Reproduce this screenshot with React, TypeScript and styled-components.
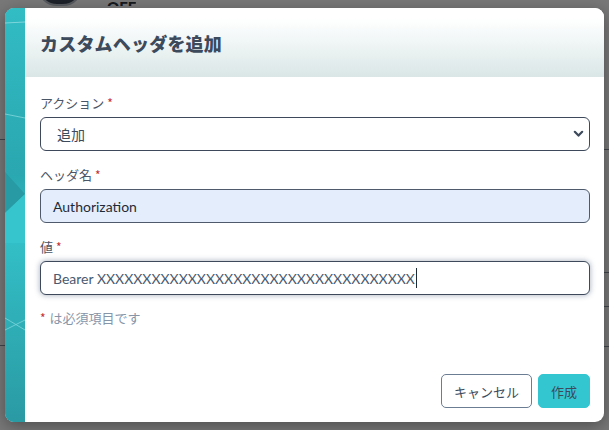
import React from "react";
import styled, { createGlobalStyle } from "styled-components";

const GlobalStyle = createGlobalStyle`
  html, body { margin: 0; padding: 0; }
  body { font-family: Lato, "Noto Sans CJK JP", sans-serif; background: #fff; }
  * { box-sizing: border-box; }
`;

const Page = styled.div`
  position: relative;
  width: 609px;
  height: 430px;
  overflow: hidden;
  background: #ffffff;
`;

const BgTop = styled.div`
  display: flex;
  align-items: flex-end;
  gap: 24px;
  height: 6px;
  padding-left: 37px;
`;

const BgToggle = styled.div`
  width: 46px;
  height: 40px;
  margin-top: -34px;
  border-radius: 23px;
  border: 2px solid #b8c0ca;
  background: linear-gradient(to right, #fff 12%, #3f4a59 12%);
`;

const BgOff = styled.div`
  font-family: Lato, sans-serif;
  font-weight: 900;
  font-size: 15px;
  line-height: 14px;
  color: #2c3644;
  margin-top: -8px;
  height: 6px;
  overflow: hidden;
`;

const BgSides = styled.div`
  display: flex;
  justify-content: space-between;
`;

const BgSide = styled.div<{ $w: number }>`
  width: ${(p) => p.$w}px;
  display: flex;
  flex-direction: column;
`;

const BgRow = styled.div<{ $h: number }>`
  height: ${(p) => p.$h}px;
  border-bottom: 1px solid #8a93a0;
`;

const Overlay = styled.div`
  position: absolute;
  inset: 0;
  background: rgba(0, 0, 0, 0.53);
  padding: 8px 0 0 5px;
`;

const Modal = styled.div`
  width: 599px;
  height: 414px;
  display: grid;
  grid-template-columns: 20px 1fr;
  border-radius: 9px;
  overflow: hidden;
  background: #fff;
  box-shadow: 0 4px 16px rgba(0, 0, 0, 0.35);
`;

const Strip = styled.div`
  height: 100%;
  background: #2eb0b9;
`;

const Main = styled.div`
  display: flex;
  flex-direction: column;
  min-width: 0;
`;

const Header = styled.div`
  height: 69px;
  display: flex;
  align-items: center;
  padding-left: 15px;
  background: linear-gradient(to bottom, #ffffff 15%, #eef4f4 55%, #dae6e6 100%);
`;

const Title = styled.h2`
  margin: 0;
  font-family: "Noto Sans CJK JP", sans-serif;
  font-weight: 900;
  font-size: 18px;
  color: #3c4a5c;
  letter-spacing: 0.2px;
`;

const Body = styled.div`
  flex: 1;
  display: flex;
  flex-direction: column;
  padding: 17px 14px 14px 15px;
`;

const Field = styled.div`
  display: flex;
  flex-direction: column;
  gap: 5px;
  margin-bottom: 15px;
`;

const Label = styled.div`
  font-family: "Noto Sans CJK JP", sans-serif;
  font-size: 13px;
  line-height: 18px;
  color: #4a5566;
`;

const Req = styled.span`
  color: #c53030;
  margin-left: 3px;
  font-size: 12px;
`;

const Box = styled.div<{ $variant?: "select" | "autofill" | "focus" }>`
  height: 34px;
  display: flex;
  align-items: center;
  border-radius: 6px;
  border: 1px solid #4a5568;
  padding: 0 ${(p) => (p.$variant === "select" ? "5px" : "12px")} 0 12px;
  font-family: Lato, "Noto Sans CJK JP", sans-serif;
  font-size: 14px;
  color: ${(p) => (p.$variant === "focus" ? "#4a5a70" : "#1f2a37")};
  background: ${(p) => (p.$variant === "autofill" ? "#e3edfb" : "#fff")};
  border-color: ${(p) => (p.$variant === "autofill" ? "#4f5b6c" : "#3e4a5b")};
  box-shadow: ${(p) =>
    p.$variant === "focus" ? "0 0 5px 1px rgba(60, 80, 110, 0.35)" : "none"};
  white-space: nowrap;
  overflow: hidden;
`;

const SelectText = styled.span`
  flex: 1;
  padding-left: 4px;
  font-family: "Noto Sans CJK JP", sans-serif;
  font-size: 14px;
  color: #3c4a5c;
`;

const Caret = styled.span`
  display: inline-block;
  width: 1px;
  height: 20px;
  background: #1f2a37;
  margin-left: 1px;
`;

const Note = styled.div`
  margin-top: -1px;
  font-family: "Noto Sans CJK JP", sans-serif;
  font-size: 13px;
  line-height: 18px;
  color: #8795a8;
`;

const NoteStar = styled.span`
  color: #c53030;
  margin-right: 4px;
  font-size: 12px;
`;

const Footer = styled.div`
  margin-top: auto;
  display: flex;
  justify-content: flex-end;
  gap: 6px;
`;

const Button = styled.button<{ $primary?: boolean }>`
  height: 34px;
  padding: 0 12px;
  border-radius: 5px;
  font-family: "Noto Sans CJK JP", sans-serif;
  font-size: 13px;
  color: #3c4a5c;
  cursor: pointer;
  border: 1px solid ${(p) => (p.$primary ? "#33c6d1" : "#6a7d93")};
  background: ${(p) => (p.$primary ? "#33c6d1" : "#fff")};
  min-width: ${(p) => (p.$primary ? "52px" : "90px")};
`;

const StripArt = () => (
  <svg width="20" height="414" viewBox="0 0 20 414" style={{ display: "block" }}>
    <defs>
      <linearGradient id="sg" x1="0" y1="0" x2="0" y2="1">
        <stop offset="0" stopColor="#32bcc4" />
        <stop offset="0.4" stopColor="#2aa7b0" />
        <stop offset="0.55" stopColor="#33c0c8" />
        <stop offset="1" stopColor="#2a9aa3" />
      </linearGradient>
    </defs>
    <rect width="20" height="414" fill="url(#sg)" />
    <line x1="0" y1="15" x2="20" y2="14" stroke="#8fdde2" strokeWidth="1" opacity="0.8" />
    <line x1="0" y1="106" x2="20" y2="110" stroke="#8fdde2" strokeWidth="1" opacity="0.7" />
    <polygon points="0,164 20,186 0,205" fill="#279aa3" />
    <polygon points="20,186 0,205 0,235 20,235" fill="#36c5cc" />
    <line x1="0" y1="310" x2="20" y2="322" stroke="#7fd6dc" strokeWidth="1" opacity="0.8" />
    <line x1="0" y1="322" x2="20" y2="312" stroke="#7fd6dc" strokeWidth="1" opacity="0.8" />
  </svg>
);

const Chevron = () => (
  <svg width="11" height="8" viewBox="0 0 11 8">
    <path d="M1.8 1.8 L5.5 5.6 L9.2 1.8" fill="none" stroke="#3c4a5c" strokeWidth="2.2" strokeLinecap="round" strokeLinejoin="round" />
  </svg>
);

export default function App() {
  return (
    <Page>
      <GlobalStyle />
      <BgTop>
        <BgToggle />
        <BgOff>OFF</BgOff>
      </BgTop>
      <BgSides>
        <BgSide $w={6}>
          <BgRow $h={134} />
          <BgRow $h={206} />
        </BgSide>
        <BgSide $w={6}>
          <BgRow $h={144} />
          <BgRow $h={123} />
          <BgRow $h={34} />
          <BgRow $h={40} />
        </BgSide>
      </BgSides>
      <Overlay>
        <Modal>
          <Strip>
            <StripArt />
          </Strip>
          <Main>
            <Header>
              <Title>カスタムヘッダを追加</Title>
            </Header>
            <Body>
              <Field>
                <Label>
                  アクション<Req>*</Req>
                </Label>
                <Box $variant="select">
                  <SelectText>追加</SelectText>
                  <Chevron />
                </Box>
              </Field>
              <Field>
                <Label>
                  ヘッダ名<Req>*</Req>
                </Label>
                <Box $variant="autofill">Authorization</Box>
              </Field>
              <Field>
                <Label>
                  値<Req>*</Req>
                </Label>
                <Box $variant="focus">
                  Bearer XXXXXXXXXXXXXXXXXXXXXXXXXXXXXXXXXXX
                  <Caret />
                </Box>
              </Field>
              <Note>
                <NoteStar>*</NoteStar>は必須項目です
              </Note>
              <Footer>
                <Button>キャンセル</Button>
                <Button $primary>作成</Button>
              </Footer>
            </Body>
          </Main>
        </Modal>
      </Overlay>
    </Page>
  );
}
